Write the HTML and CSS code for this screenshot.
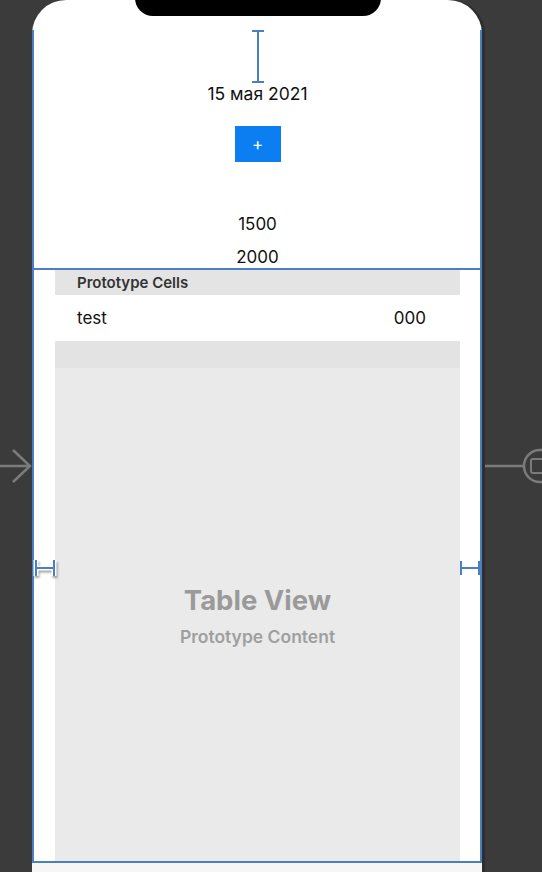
FILE: index.html
```html
<!DOCTYPE html>
<html lang="ru">
<head>
<meta charset="utf-8">
<title>Storyboard</title>
<link rel="stylesheet" href="styles.css">
</head>
<body>
<div class="canvas">
  <svg class="segue-in" width="32" height="40" viewBox="0 0 32 40">
    <path d="M0 20 H30 M13 4 L30 20 L13 36" fill="none" stroke="#7b7b7b" stroke-width="2.5"/>
  </svg>
  <svg class="segue-out" width="60" height="40" viewBox="0 0 60 40">
    <path d="M0 20 H40" stroke="#7b7b7b" stroke-width="2.5"/>
    <circle cx="57" cy="20" r="16" fill="none" stroke="#7b7b7b" stroke-width="2.5"/>
    <rect x="48" y="13" width="14" height="14" rx="2" fill="none" stroke="#7b7b7b" stroke-width="2"/>
  </svg>
  <div class="phone">
    <div class="notch"></div>
    <div class="view">
      <div class="stack">
        <svg class="ibeam" width="14" height="53" viewBox="0 0 14 53">
          <path d="M1 1 H13 M7 1 V52 M1 52 H13" fill="none" stroke="#4a7fc1" stroke-width="2"/>
        </svg>
        <div class="date">15 мая 2021</div>
        <div class="add-btn">+</div>
        <div class="num n1">1500</div>
        <div class="num n2">2000</div>
      </div>
      <div class="table">
        <div class="section-head">Prototype Cells</div>
        <div class="cell"><span>test</span><span>000</span></div>
        <div class="strip"></div>
        <div class="placeholder">
          <div class="ph-title">Table View</div>
          <div class="ph-sub">Prototype Content</div>
        </div>
      </div>
      <svg class="pin pin-left" width="24" height="20" viewBox="0 0 24 20">
        <path d="M3 2 V18 M21 2 V18 M3 10 H21" fill="none" stroke="#ffffff" stroke-width="5"/>
        <path d="M3 2 V18 M21 2 V18 M3 10 H21" fill="none" stroke="#4a7fc1" stroke-width="2"/>
      </svg>
      <svg class="pin pin-right" width="24" height="18" viewBox="0 0 24 18">
        <path d="M3 2 V16 M21 2 V16 M3 9 H21" fill="none" stroke="#4a7fc1" stroke-width="2"/>
      </svg>
    </div>
    <div class="below"></div>
  </div>
</div>
</body>
</html>
```
FILE: styles.css
```css
html, body {
  margin: 0;
  padding: 0;
}
body {
  background: #3c3b3b;
  width: 542px;
  height: 872px;
  overflow: hidden;
  font-family: Inter, "Noto Sans", sans-serif;
}
.canvas {
  position: relative;
  padding-left: 32px;
  height: 872px;
}
.segue-in {
  position: absolute;
  left: 0;
  top: 446px;
}
.segue-out {
  position: absolute;
  left: 483px;
  top: 446px;
}
.phone {
  position: relative;
  width: 450px;
  height: 872px;
  background: #ffffff;
  border-radius: 34px 34px 0 0;
  box-shadow: 3px 0 0 #2f2e2e;
  padding-top: 30px;
  box-sizing: border-box;
  display: flex;
  flex-direction: column;
}
.notch {
  position: absolute;
  top: -10px;
  left: 103px;
  width: 246px;
  height: 26px;
  background: #000;
  border-radius: 0 0 18px 18px;
}
.view {
  position: relative;
  border-left: 2px solid #4a7fc1;
  border-right: 2px solid #4a7fc1;
  border-bottom: 2px solid #4a7fc1;
  display: flex;
  flex-direction: column;
}
.stack {
  height: 238px;
  border-bottom: 2px solid #4a7fc1;
  display: flex;
  flex-direction: column;
  align-items: center;
}
.ibeam {
  display: block;
  margin-left: 1px;
}
.date {
  font-size: 17.5px;
  line-height: 20px;
  margin-top: 1px;
  color: #111;
  margin-left: 1px;
}
.add-btn {
  margin-top: 22px;
  width: 46px;
  height: 36px;
  background: #0b7ff2;
  color: #fff;
  font-size: 17px;
  line-height: 36px;
  text-align: center;
  margin-left: 1px;
}
.num {
  font-size: 17px;
  line-height: 20px;
  color: #111;
  margin-left: 1px;
}
.n1 { margin-top: 52px; }
.n2 { margin-top: 13px; }
.table {
  padding: 0 20px 0 21px;
  display: flex;
  flex-direction: column;
}
.section-head {
  height: 25px;
  background: #e4e4e4;
  font-size: 15px;
  font-weight: 600;
  color: #333;
  line-height: 25px;
  padding-left: 22px;
}
.cell {
  height: 46px;
  display: flex;
  justify-content: space-between;
  align-items: center;
  padding: 0 34px 0 22px;
  font-size: 17px;
  color: #111;
}
.strip {
  height: 27px;
  background: #e3e3e3;
}
.placeholder {
  height: 493px;
  background: #eaeaea;
  display: flex;
  flex-direction: column;
  align-items: center;
  padding-top: 214px;
  box-sizing: border-box;
}
.ph-title {
  font-size: 27.5px;
  font-weight: 700;
  color: #9a9a9a;
  line-height: 36px;
}
.ph-sub {
  font-size: 17.5px;
  font-weight: 600;
  color: #9f9f9f;
  line-height: 22px;
  margin-top: 8px;
}
.pin {
  position: absolute;
}
.pin-left {
  left: -1px;
  top: 528px;
  filter: drop-shadow(1px 2px 1px rgba(0,0,0,0.35));
}
.pin-right {
  left: 424px;
  top: 529px;
}
.below {
  flex: 1;
  background: #f6f6f6;
}
```
